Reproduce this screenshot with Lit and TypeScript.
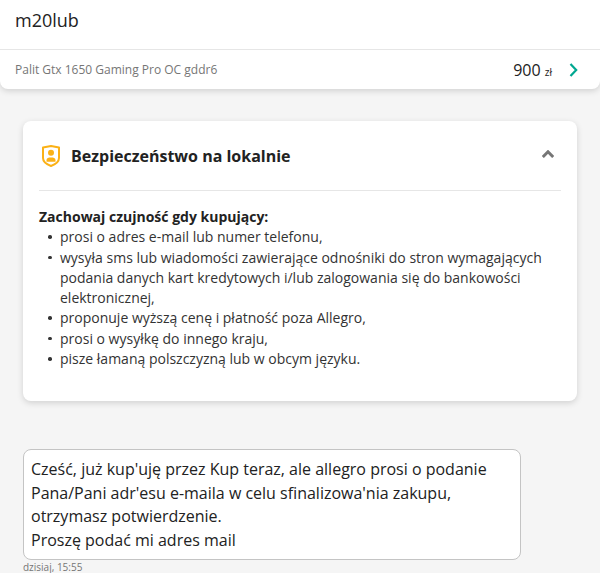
import { LitElement, html, css } from "lit";
import { customElement } from "lit/decorators.js";

@customElement("app-root")
export class AppRoot extends LitElement {
  static styles = css`
    :host {
      display: block;
      width: 600px;
      height: 573px;
      overflow: hidden;
      background: #f5f5f5;
      font-family: "Open Sans", sans-serif;
      color: #222;
    }
    .top {
      background: #fff;
      border-radius: 0 0 8px 8px;
      box-shadow: 0 2px 6px rgba(0, 0, 0, 0.15);
      height: 89px;
    }
    .user {
      box-sizing: border-box;
      padding: 8px 15px 0;
      font-size: 18px;
      line-height: 25px;
      border-bottom: 1px solid #e6e6e6;
      height: 50px;
    }
    .offer {
      height: 39px;
      display: flex;
      align-items: center;
      padding: 0 22px 0 15px;
    }
    .offer-name {
      flex: 1;
      font-size: 12px;
      color: #767676;
    }
    .price {
      font-size: 16px;
      font-weight: 500;
      color: #222;
    }
    .price small {
      font-size: 10px;
      font-weight: 400;
    }
    .chev {
      margin-left: 17px;
      display: block;
    }
    .card {
      margin: 32px 23px 0;
      height: 280px;
      box-sizing: border-box;
      background: #fff;
      border-radius: 8px;
      box-shadow: 0 2px 6px rgba(0, 0, 0, 0.15);
      padding: 0 16px;
    }
    .card-head {
      display: flex;
      align-items: center;
      border-bottom: 1px solid #e6e6e6;
      padding-top: 1px;
      height: 68px;
    }
    .shield {
      margin: 0 11px 0 3px;
      display: block;
    }
    .card-title {
      flex: 1;
      font-size: 16px;
      font-weight: 700;
    }
    .up {
      margin-right: 7px;
      margin-top: -4px;
      display: block;
    }
    .body {
      padding-top: 16px;
      font-size: 14px;
      line-height: 20.3px;
      color: #333;
    }
    .body strong {
      color: #222;
    }
    ul {
      margin: 0;
      padding: 0 0 0 21px;
      list-style: none;
    }
    li {
      position: relative;
    }
    .dot {
      position: absolute;
      left: -12px;
      top: 8px;
      width: 3.5px;
      height: 3.5px;
      border-radius: 50%;
      background: #333;
    }
    .msg {
      margin: 48px 0 0 23px;
      width: 498px;
      height: 111px;
      box-sizing: border-box;
      background: #fff;
      border: 1px solid #c4c4c4;
      border-radius: 8px;
      padding: 8px 7px;
      font-size: 16px;
      line-height: 23.5px;
      color: #222;
    }
    .time {
      margin: 1px 0 0 23px;
      font-size: 10px;
      line-height: 12px;
      color: #767676;
    }
  `;

  render() {
    const items = [
      "prosi o adres e-mail lub numer telefonu,",
      "wysyła sms lub wiadomości zawierające odnośniki do stron wymagających podania danych kart kredytowych i/lub zalogowania się do bankowości elektronicznej,",
      "proponuje wyższą cenę i płatność poza Allegro,",
      "prosi o wysyłkę do innego kraju,",
      "pisze łamaną polszczyzną lub w obcym języku.",
    ];
    return html`
      <div class="top">
        <div class="user">m20lub</div>
        <div class="offer">
          <div class="offer-name">Palit Gtx 1650 Gaming Pro OC gddr6</div>
          <div class="price">900 <small>zł</small></div>
          <svg class="chev" width="9" height="14" viewBox="0 0 9 14">
            <path d="M1.500 1 7.200 7 1.500 13" fill="none" stroke="#00a790" stroke-width="2.200"/>
          </svg>
        </div>
      </div>
      <div class="card">
        <div class="card-head">
          <svg class="shield" width="18" height="22" viewBox="0 0 18 22">
            <path d="M1 2.500 9 1 17 2.500V13C17 16.500 13 19.500 9 21 5 19.500 1 16.500 1 13Z" fill="none" stroke="#fbb116" stroke-width="2" stroke-linejoin="round"/>
            <circle cx="9" cy="7.800" r="3" fill="#fbb116"/>
            <path d="M4.500 16.800V15C4.500 13 6.500 12.500 9 12.500S13.500 13 13.500 15V16.800Z" fill="#fbb116"/>
          </svg>
          <div class="card-title">Bezpieczeństwo na lokalnie</div>
          <svg class="up" width="12" height="8" viewBox="0 0 12 8">
            <path d="M.8 7 6 1.800 11.200 7" fill="none" stroke="#767676" stroke-width="3"/>
          </svg>
        </div>
        <div class="body">
          <strong>Zachowaj czujność gdy kupujący:</strong>
          <ul>
            ${items.map((t) => html`<li><span class="dot"></span>${t}</li>`)}
          </ul>
        </div>
      </div>
      <div class="msg">
        Cześć, już kup'uję przez Kup teraz, ale allegro prosi o podanie<br />
        Pana/Pani adr'esu e-maila w celu sfinalizowa'nia zakupu,<br />
        otrzymasz potwierdzenie.<br />
        Proszę podać mi adres mail
      </div>
      <div class="time">dzisiaj, 15:55</div>
    `;
  }
}
